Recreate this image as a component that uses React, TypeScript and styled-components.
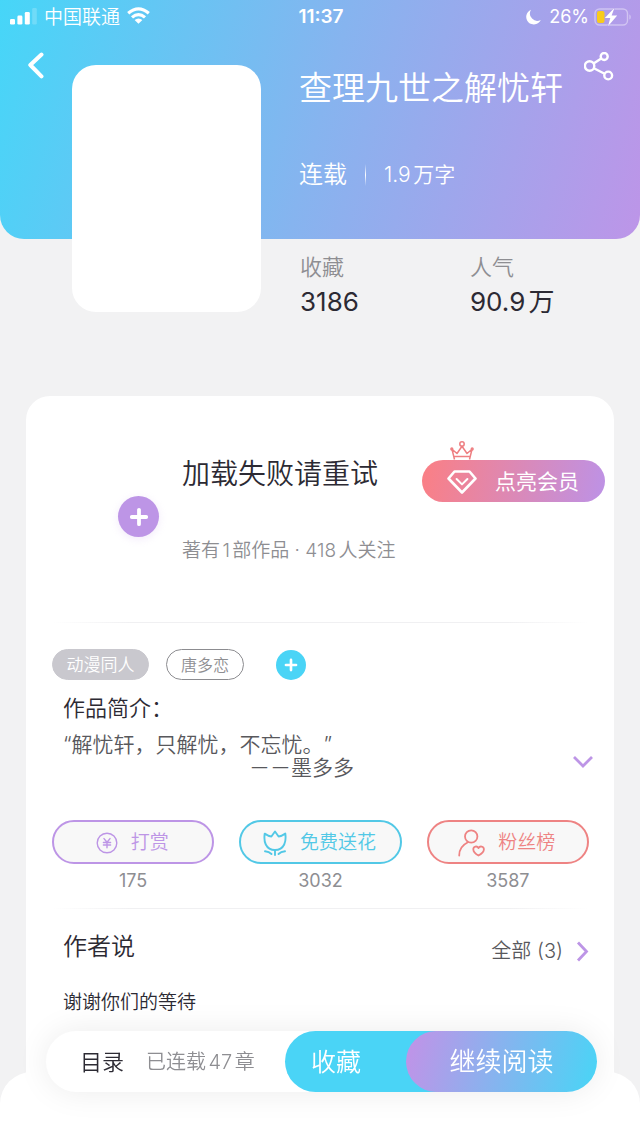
import React from "react";
import styled, { createGlobalStyle } from "styled-components";

const color = {
  cyan: "#4ad4f6",
  purple: "#bd95e6",
  coral: "#ee8383",
  ink: "#2c2a33",
  body: "#58585c",
  muted: "#8e8e92",
  page: "#f2f2f3",
};

const GlobalStyle = createGlobalStyle`
  *, *::before, *::after { box-sizing: border-box; }
  body {
    margin: 0;
    background: ${color.page};
    color: ${color.ink};
    font-family: Inter, "Noto Sans CJK SC", sans-serif;
    font-weight: 350;
    line-height: 1.2;
    text-autospace: normal;
    text-spacing-trim: space-all;
  }
  h1, h2, p, dl, dd { margin: 0; font-weight: inherit; }
  button { border: 0; padding: 0; background: none; color: inherit; font: inherit; cursor: pointer; }
  a { color: inherit; text-decoration: none; }
  svg { display: block; flex: none; }
`;

const Page = styled.div`
  display: flex;
  flex-direction: column;
  min-height: 100vh;
`;

const Header = styled.header`
  color: #fff;
  background: linear-gradient(105deg, #46d6f8 0%, #86b4ef 50%, #bd95e8 100%);
  border-radius: 0 0 24px 24px;
`;

const StatusBar = styled.div`
  display: grid;
  grid-template-columns: 1fr auto 1fr;
  align-items: center;
  height: 34px;
  padding: 0 8px 0 10px;
  font-size: 18px;
`;

const StatusGroup = styled.div<{ $end?: boolean }>`
  display: flex;
  align-items: center;
  gap: ${(p) => (p.$end ? 5 : 7)}px;
  justify-content: ${(p) => (p.$end ? "flex-end" : "flex-start")};
`;

const Carrier = styled.span`
  padding-top: 2px;
  font-size: 19px;
`;

const Battery = styled.span`
  font-weight: 400;
`;

const Clock = styled.time`
  font-size: 19px;
  font-weight: 600;
`;

const HeroRow = styled.div`
  display: flex;
  align-items: flex-start;
  padding: 18px 26px 0 28px;
`;

const Cover = styled.div`
  flex: none;
  width: 189px;
  height: 247px;
  margin: 13px 0 -73px 28px;
  border-radius: 24px;
  background: #fff;
`;

const BookInfo = styled.div`
  flex: 1;
  margin: 13px 0 0 38px;
`;

const Title = styled.h1`
  font-size: 33px;
  line-height: 46px;
  white-space: nowrap;
`;

const Meta = styled.div`
  display: flex;
  align-items: center;
  gap: 18px;
  height: 32px;
  margin-top: 48px;
  font-size: 21px;
`;

const Status = styled.span`
  font-size: 24px;
`;

const MetaRule = styled.span`
  width: 1px;
  height: 22px;
  background: linear-gradient(transparent, #fff, transparent);
`;

const Stats = styled.dl`
  display: flex;
  padding: 14px 0 76px 300px;
`;

const Stat = styled.div`
  width: 170px;
`;

const StatLabel = styled.dt`
  font-size: 22px;
  line-height: 28px;
  color: ${color.muted};
`;

const StatValue = styled.dd`
  margin-top: 3px;
  font-size: 26px;
  font-weight: 400;
  line-height: 36px;
`;

const Card = styled.main`
  flex: 1;
  margin: 0 26px;
  padding-bottom: 122px;
  border-radius: 24px 24px 0 0;
  background: #fff;
`;

const Author = styled.section`
  display: flex;
  align-items: flex-start;
  padding: 57px 9px 57px 92px;
`;

const RoundButton = styled.button<{ $size: number; $fill: string }>`
  display: grid;
  place-items: center;
  flex: none;
  width: ${(p) => p.$size}px;
  height: ${(p) => p.$size}px;
  border-radius: 50%;
  color: #fff;
  background: ${(p) => p.$fill};
`;

const FollowButton = styled(RoundButton)`
  margin-top: 43px;
  box-shadow: 0 2px 8px rgba(189, 149, 230, 0.2);
`;

const AuthorText = styled.div`
  flex: 1;
  margin-left: 23px;
  white-space: nowrap;
`;

const AuthorName = styled.h2`
  font-size: 28px;
  line-height: 42px;
`;

const AuthorMeta = styled.p`
  margin-top: 42px;
  font-size: 19px;
  line-height: 28px;
  color: ${color.muted};
`;

const VipButton = styled.button`
  position: relative;
  display: flex;
  flex: none;
  align-items: center;
  gap: 18px;
  width: 183px;
  height: 42px;
  margin-top: 7px;
  padding: 2px 0 0 25px;
  border-radius: 21px;
  color: #fff;
  background: linear-gradient(100deg, #fb7f84, #bd92e6);
  font-size: 21px;
  font-weight: 400;
`;

const Crown = styled.svg`
  position: absolute;
  left: 28px;
  bottom: 100%;
`;

const Divider = styled.hr`
  height: 1px;
  margin: 0 26px;
  border: 0;
  background: linear-gradient(90deg, transparent, #f0f0f2 15%, #f0f0f2 85%, transparent);
`;

const Tags = styled.div`
  display: flex;
  align-items: center;
  padding: 26px 26px 0;
`;

const Tag = styled.a<{ $outlined?: boolean }>`
  display: grid;
  place-items: center;
  width: ${(p) => (p.$outlined ? 78 : 97)}px;
  height: 31px;
  margin-right: ${(p) => (p.$outlined ? 32 : 17)}px;
  padding-top: 2px;
  border: 1px solid ${(p) => (p.$outlined ? "#8c8c90" : "#c9c8ce")};
  border-radius: 16px;
  font-size: ${(p) => (p.$outlined ? 16 : 17)}px;
  color: ${(p) => (p.$outlined ? color.muted : "#fff")};
  background: ${(p) => (p.$outlined ? "#fff" : "#c9c8ce")};
`;

const Intro = styled.section`
  display: flex;
  align-items: flex-end;
  justify-content: space-between;
  padding: 13px 20px 0 37px;
`;

const IntroTitle = styled.h2`
  font-size: 22px;
  line-height: 30px;
`;

const IntroText = styled.p`
  margin-top: 10px;
  font-size: 21px;
  line-height: 23px;
  color: ${color.body};
`;

const Signature = styled.p`
  padding-left: 186px;
  font-size: 21px;
  line-height: 23px;
  color: ${color.body};
`;

const ExpandButton = styled.button`
  margin-bottom: 10px;
`;

const Actions = styled.div`
  display: grid;
  grid-template-columns: repeat(3, 1fr);
  gap: 25px;
  padding: 41px 25px 16px 26px;
`;

const Action = styled.div<{ $tone: string }>`
  text-align: center;
  color: ${(p) => p.$tone};
`;

const ActionButton = styled.button`
  display: flex;
  align-items: center;
  justify-content: center;
  gap: 13px;
  width: 100%;
  height: 44px;
  padding: 2px 2px 0 0;
  border: 2px solid;
  border-radius: 22px;
  background: #f8f8f8;
  font-size: 19px;
  line-height: 26px;
`;

const ActionCount = styled.p`
  margin-top: 6px;
  font-size: 18px;
  font-weight: 400;
  line-height: 22px;
  color: ${color.muted};
`;

const Notes = styled.section`
  padding: 20px 25px 0 37px;
`;

const NotesHead = styled.div`
  display: flex;
  align-items: center;
  justify-content: space-between;
`;

const NotesTitle = styled.h2`
  font-size: 24px;
  line-height: 34px;
`;

const AllLink = styled.a`
  display: flex;
  align-items: center;
  gap: 13px;
  padding-top: 8px;
  font-size: 20px;
  line-height: 28px;
  color: ${color.body};
`;

const NoteText = styled.p`
  margin-top: 24px;
  font-size: 19px;
  line-height: 28px;
`;

const Footer = styled.footer`
  position: fixed;
  inset: auto 0 0;
  padding-bottom: 46px;
  border-radius: 32px 32px 0 0;
  background: #fff;
`;

const ReadBar = styled.div`
  display: flex;
  align-items: center;
  height: 61px;
  margin: -41px 43px 0 46px;
  border-radius: 31px;
  background: #fff;
  box-shadow: 0 0 32px rgba(0, 0, 0, 0.08);
`;

const Contents = styled.a`
  display: flex;
  flex: 1;
  align-items: center;
  gap: 22px;
  padding-left: 34px;
  font-size: 22px;
  line-height: 28px;
  white-space: nowrap;
`;

const ContentsNote = styled.span`
  font-size: 20px;
  color: ${color.muted};
`;

const CollectButton = styled.button`
  width: 152px;
  height: 61px;
  padding-left: 26px;
  border-radius: 31px 0 0 31px;
  color: #fff;
  background: ${color.cyan};
  font-size: 25px;
  text-align: left;
`;

const ReadButton = styled.button`
  width: 191px;
  height: 61px;
  margin-left: -31px;
  border-radius: 31px;
  color: #fff;
  background: linear-gradient(105deg, #bd95e8 5%, #8bb1ee 45%, #4ad4f6 98%);
  font-size: 26px;
`;

const Plus = ({ size }: { size: number }) => (
  <svg width={size} height={size} viewBox="0 0 18 18" fill="none" stroke="currentColor" strokeWidth="3.4" strokeLinecap="round">
    <path d="M9 2.500v13M2.500 9h13" />
  </svg>
);

const SignalIcon = () => (
  <svg width="27" height="18" viewBox="0 0 27 18" fill="#fff">
    <rect x="0" y="11" width="5" height="5.5" rx="1.3" />
    <rect x="7.4" y="7.6" width="5" height="8.900" rx="1.3" />
    <rect x="14.8" y="4" width="5" height="12.5" rx="1.3" />
    <rect x="22.2" y="0" width="4.6" height="16.5" rx="1.3" opacity="0.2" />
  </svg>
);

const WifiIcon = () => (
  <svg width="23" height="19" viewBox="0 0 23 19" fill="none" stroke="#fff" strokeWidth="3.200">
    <path d="M1.200 6.200Q11.500-2.600 21.800 6.200" />
    <path d="M5 10.400Q11.500 4.800 18 10.400" />
    <path d="M11.500 16.800 7.600 13.100Q11.500 10 15.400 13.100Z" fill="#fff" stroke="none" />
  </svg>
);

const MoonIcon = () => (
  <svg width="19" height="16" viewBox="-1 0 19 16" fill="#fff">
    <path d="M5 .8A7.600 7.600 0 1 0 14.800 10.900 7.300 7.300 0 0 1 5 .8Z" />
  </svg>
);

const BatteryIcon = () => (
  <svg width="38" height="20" viewBox="0 0 38 20" fill="none">
    <rect x="1" y="2" width="32.5" height="16" rx="4.5" stroke="#fff" strokeOpacity="0.4" strokeWidth="1.4" />
    <path d="M35.3 7.400c2 .6 2 4.600 0 5.200z" fill="#fff" opacity="0.4" />
    <rect x="3" y="4" width="7.500" height="12" rx="2" fill="#f8cb1c" />
    <path d="M20.500 .8 10.800 11h5.500l-2.300 8.200 9.200-10.600h-5.600z" fill="#fff" stroke="#b19de9" strokeWidth="1" paintOrder="stroke" />
  </svg>
);

const BackIcon = () => (
  <svg width="16" height="27" viewBox="0 0 16 27" fill="none" stroke="#fff" strokeWidth="4" strokeLinecap="round" strokeLinejoin="round">
    <path d="M13.500 2.500 2.300 13l11.200 11.300" />
  </svg>
);

const ShareIcon = () => (
  <svg width="30" height="30" viewBox="0 0 30 30" fill="none" stroke="#fff" strokeWidth="2.400">
    <circle cx="5.600" cy="14" r="4.700" />
    <circle cx="20.200" cy="4.500" r="3.500" />
    <circle cx="24.200" cy="23.500" r="3.900" />
    <path d="m9.600 11.400 7.600-5M9.900 16.200l10.700 5.500" />
  </svg>
);

const CrownIcon = () => (
  <Crown width="24" height="19" viewBox="0 0 24 19" fill="none" stroke="#ee7f82" strokeWidth="1.5" strokeLinejoin="round">
    <circle cx="12" cy="3" r="2.200" />
    <path d="M4.500 18.500 2 8.200l5 4.300 5-7.200 5 7.200 5-4.300-2.500 10.300M4.500 15.600h15" />
    <circle cx="1.800" cy="8" r=".9" />
    <circle cx="22.200" cy="8" r=".9" />
  </Crown>
);

const DiamondIcon = () => (
  <svg width="30" height="24" viewBox="0 0 30 24" fill="none" stroke="#fff" strokeWidth="2.600" strokeLinejoin="round">
    <path d="M7.500 1.500h15l6 7L15 22.500 1.500 8.500Z" />
    <path d="m9.600 9 5.400 5.400L20.400 9" strokeWidth="2" strokeLinecap="round" />
  </svg>
);

const YenIcon = () => (
  <svg width="22" height="22" viewBox="0 0 22 22" fill="none" stroke="currentColor" strokeWidth="1.4" strokeLinecap="round">
    <circle cx="11" cy="11" r="9.800" />
    <path d="m8 6.600 3 3.700 3-3.700M7.400 10.500h7.200M7.400 13h7.200M11 10.500v5.200" />
  </svg>
);

const FlowerIcon = () => (
  <svg width="24" height="26" viewBox="0 0 24 26" fill="none" stroke="currentColor" strokeWidth="1.900" strokeLinecap="round" strokeLinejoin="round">
    <path d="M12 1.500 15.600 6.500C17.700 6.300 20.200 5 22.300 3.600 22.900 8 22.700 11.500 21.200 14.500 19.500 18 16 20 12 20S4.500 18 2.800 14.500C1.300 11.500 1.100 8 1.700 3.600 3.800 5 6.300 6.300 8.400 6.500Z" />
    <path d="M12 21v4M2 21.300c2.700.2 4.800 1 6.500 2.700M22 21.300c-2.700.2-4.800 1-6.500 2.700" />
  </svg>
);

const FanIcon = () => (
  <svg width="27" height="28" viewBox="0 0 27 28" fill="none" stroke="currentColor" strokeWidth="1.800" strokeLinecap="round" strokeLinejoin="round">
    <circle cx="13.200" cy="7.500" r="6.200" />
    <path d="M1.200 26.500c0-6 3-10.400 8.300-13" />
    <path d="M20.500 26.500c-3.200-1.700-5.200-4-5.200-6.200 0-3 3.800-3.800 5.200-1.200 1.400-2.600 5.400-1.800 5.400 1.200 0 2.200-2.200 4.500-5.400 6.200Z" />
  </svg>
);

const ChevronDown = () => (
  <svg width="22" height="14" viewBox="0 0 22 14" fill="none" stroke={color.purple} strokeWidth="2.800">
    <path d="m2 2 9 9 9-9" />
  </svg>
);

const ChevronRight = () => (
  <svg width="13" height="21" viewBox="0 0 13 21" fill="none" stroke={color.purple} strokeWidth="2.800">
    <path d="m2 1.500 8.500 9-8.500 9" />
  </svg>
);

const actions = [
  { label: "打赏", count: 175, tone: color.purple, Icon: YenIcon },
  { label: "免费送花", count: 3032, tone: "#52c8e6", Icon: FlowerIcon },
  { label: "粉丝榜", count: 3587, tone: color.coral, Icon: FanIcon },
];

export default function App() {
  return (
    <Page>
      <GlobalStyle />
      <Header>
        <StatusBar>
          <StatusGroup>
            <SignalIcon />
            <Carrier>中国联通</Carrier>
            <WifiIcon />
          </StatusGroup>
          <Clock>11:37</Clock>
          <StatusGroup $end>
            <MoonIcon />
            <Battery>26%</Battery>
            <BatteryIcon />
          </StatusGroup>
        </StatusBar>
        <HeroRow>
          <button aria-label="返回">
            <BackIcon />
          </button>
          <Cover />
          <BookInfo>
            <Title>查理九世之解忧轩</Title>
            <Meta>
              <Status>连载</Status>
              <MetaRule />
              <span>1.9万字</span>
            </Meta>
          </BookInfo>
          <button aria-label="分享">
            <ShareIcon />
          </button>
        </HeroRow>
      </Header>

      <Stats>
        <Stat>
          <StatLabel>收藏</StatLabel>
          <StatValue>3186</StatValue>
        </Stat>
        <Stat>
          <StatLabel>人气</StatLabel>
          <StatValue>90.9万</StatValue>
        </Stat>
      </Stats>

      <Card>
        <Author>
          <FollowButton $size={41} $fill={color.purple} aria-label="关注">
            <Plus size={20} />
          </FollowButton>
          <AuthorText>
            <AuthorName>加载失败请重试</AuthorName>
            <AuthorMeta>著有1部作品 · 418人关注</AuthorMeta>
          </AuthorText>
          <VipButton>
            <CrownIcon />
            <DiamondIcon />
            点亮会员
          </VipButton>
        </Author>
        <Divider />
        <Tags>
          <Tag href="#">动漫同人</Tag>
          <Tag href="#" $outlined>
            唐多恋
          </Tag>
          <RoundButton $size={30} $fill={color.cyan} aria-label="添加标签">
            <Plus size={14} />
          </RoundButton>
        </Tags>
        <Intro>
          <div>
            <IntroTitle>作品简介：</IntroTitle>
            <IntroText>“解忧轩，只解忧，不忘忧。”</IntroText>
            <Signature>－－墨多多</Signature>
          </div>
          <ExpandButton aria-label="展开">
            <ChevronDown />
          </ExpandButton>
        </Intro>
        <Actions>
          {actions.map(({ label, count, tone, Icon }) => (
            <Action key={label} $tone={tone}>
              <ActionButton>
                <Icon />
                {label}
              </ActionButton>
              <ActionCount>{count}</ActionCount>
            </Action>
          ))}
        </Actions>
        <Divider />
        <Notes>
          <NotesHead>
            <NotesTitle>作者说</NotesTitle>
            <AllLink href="#">
              全部 (3)
              <ChevronRight />
            </AllLink>
          </NotesHead>
          <NoteText>谢谢你们的等待</NoteText>
        </Notes>
      </Card>

      <Footer>
        <ReadBar>
          <Contents href="#">
            目录
            <ContentsNote>已连载47章</ContentsNote>
          </Contents>
          <CollectButton>收藏</CollectButton>
          <ReadButton>继续阅读</ReadButton>
        </ReadBar>
      </Footer>
    </Page>
  );
}
